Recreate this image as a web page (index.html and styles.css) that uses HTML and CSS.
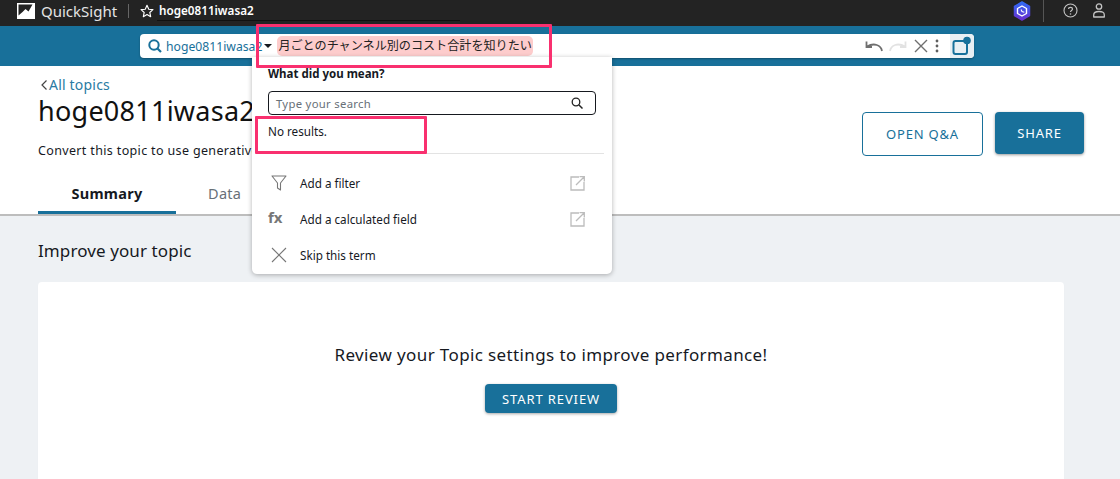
FILE: index.html
```html
<!DOCTYPE html>
<html lang="en">
<head>
<meta charset="utf-8">
<title>QuickSight</title>
<link rel="stylesheet" href="styles.css">
</head>
<body>
<header class="topbar">
  <svg class="logo" width="18" height="16" viewBox="0 0 18 16"><rect width="18" height="16" fill="#fff"/><path fill="#232323" d="M1.500 1.500H15.500L11.500 8.500 8.500 6 5.500 9 1.500 12.500Z"/></svg>
  <span class="brand">QuickSight</span>
  <span class="top-sep"></span>
  <svg class="star" width="14" height="14" viewBox="0 0 16 16"><path fill="none" stroke="#fff" stroke-width="1.300" stroke-linejoin="round" d="M8 1.500 10 6 14.800 6.500 11.200 9.700 12.200 14.500 8 12 3.800 14.500 4.800 9.700 1.200 6.500 6 6Z"/></svg>
  <span class="top-title">hoge0811iwasa2</span>
  <span class="top-spacer"></span>
  <svg class="hex" width="18" height="20" viewBox="0 0 18 20"><defs><linearGradient id="hexg" x1="0" y1="0" x2="0" y2="1"><stop offset="0" stop-color="#2f6bf5"/><stop offset="1" stop-color="#6a2fd0"/></linearGradient></defs><path fill="url(#hexg)" stroke="url(#hexg)" stroke-linejoin="round" stroke-width="1.500" d="M9 1 16.500 5.500V14.500L9 19 1.500 14.500V5.500Z"/><path fill="none" stroke="#fff" stroke-width="1.400" stroke-linejoin="round" d="M9 5 13.500 7.500V12.500L9 15 4.500 12.500V7.500Z"/><path fill="none" stroke="#fff" stroke-width="1.100" d="M8 8.500 9 10.500 11.300 11.300"/></svg>
  <span class="top-sep-right"></span>
  <svg class="help" width="15" height="15" viewBox="0 0 15 15"><circle cx="7.500" cy="7.500" r="6.500" fill="none" stroke="#c4c4c4" stroke-width="1.100"/><path fill="none" stroke="#c4c4c4" stroke-width="1.200" d="M5.500 6C5.500 3.800 9.500 3.800 9.500 6 9.500 7.500 7.500 7.300 7.500 9"/><circle cx="7.500" cy="11" r=".8" fill="#c4c4c4"/></svg>
  <svg class="user" width="12" height="15" viewBox="0 0 12 15"><circle cx="6" cy="3.500" r="2.700" fill="none" stroke="#c4c4c4" stroke-width="1.300"/><path fill="none" stroke="#c4c4c4" stroke-width="1.300" stroke-linejoin="round" d="M.7 14V12C.7 9.500 2.500 8.500 6 8.500S11.300 9.500 11.300 12V14Z"/></svg>
</header>

<div class="askbar">
  <div class="askbox">
    <svg class="ask-search" width="14" height="14" viewBox="0 0 14 14"><circle cx="6" cy="6" r="4.700" fill="none" stroke="#18709a" stroke-width="2"/><path stroke="#18709a" stroke-width="2.200" d="M9.500 9.500 13 13"/></svg>
    <span class="ask-topic">hoge0811iwasa2</span>
    <span class="ask-caret"></span>
    <span class="ask-query">月ごとのチャンネル別のコスト合計を知りたい</span>
    <span class="ask-spacer"></span>
    <svg class="ask-undo" width="18" height="12" viewBox="0 0 18 12"><path fill="none" stroke="#6f6f6f" stroke-width="1.800" d="M17 11C16 5 9 2.500 2 6.500M1.500 1.500V7H7"/></svg>
    <svg class="ask-redo" width="18" height="12" viewBox="0 0 18 12"><path fill="none" stroke="#e2e2e2" stroke-width="1.800" d="M1 11C2 5 9 2.500 16 6.500M16.500 1.500V7H11"/></svg>
    <svg class="ask-x" width="14" height="14" viewBox="0 0 14 14"><path fill="none" stroke="#6f6f6f" stroke-width="1.400" d="M1 1 13 13M13 1 1 13"/></svg>
    <svg class="ask-more" width="4" height="14" viewBox="0 0 4 14"><circle cx="2" cy="2" r="1.400" fill="#5f5f5f"/><circle cx="2" cy="7" r="1.400" fill="#5f5f5f"/><circle cx="2" cy="12" r="1.400" fill="#5f5f5f"/></svg>
    <span class="ask-panel">
      <svg width="20" height="20" viewBox="0 0 20 20"><rect x="1.500" y="5" width="13.500" height="13" rx="2" fill="none" stroke="#18709a" stroke-width="2"/><circle cx="15" cy="4.500" r="3.800" fill="#18709a"/></svg>
    </span>
  </div>
</div>

<main class="page">
  <section class="head">
    <div class="head-row">
      <div class="head-left">
        <a class="back"><svg width="6" height="10" viewBox="0 0 6 10"><path fill="none" stroke="#444" stroke-width="1.200" d="M5.500 .5 1 5 5.500 9.500"/></svg>All topics</a>
        <h1 class="title">hoge0811iwasa2</h1>
        <p class="sub">Convert this topic to use generative BI</p>
      </div>
      <div class="actions">
        <button class="btn btn-outline">OPEN Q&amp;A</button>
        <button class="btn btn-solid">SHARE</button>
      </div>
    </div>
    <nav class="tabs">
      <span class="tab tab-active">Summary</span>
      <span class="tab">Data</span>
    </nav>
  </section>
  <section class="body">
    <h2 class="improve">Improve your topic</h2>
    <div class="card">
      <p class="card-text">Review your Topic settings to improve performance!</p>
      <button class="btn-review">START REVIEW</button>
    </div>
  </section>
</main>

<div class="menu">
  <div class="menu-title">What did you mean?</div>
  <div class="menu-input">
    <span class="menu-ph">Type your search</span>
    <svg width="12" height="12" viewBox="0 0 12 12"><circle cx="5" cy="5" r="3.800" fill="none" stroke="#222" stroke-width="1.300"/><path stroke="#222" stroke-width="1.500" d="M8 8 11.500 11.500"/></svg>
  </div>
  <div class="menu-none">No results.</div>
  <div class="menu-rule"></div>
  <div class="menu-item">
    <svg class="mi" width="16" height="16" viewBox="0 0 16 16"><path fill="none" stroke="#777" stroke-width="1.100" stroke-linejoin="round" d="M1 1H15L9.500 8V15L6.500 13V8Z"/></svg>
    <span class="mi-label">Add a filter</span>
    <svg class="mi-ext" width="15" height="15" viewBox="0 0 15 15"><path fill="none" stroke="#bcbcbc" stroke-width="1.300" d="M9 1H1V14H14V6M6 9 14 1M9.500 .7H14.300V5.500"/></svg>
  </div>
  <div class="menu-item">
    <span class="mi mi-fx">fx</span>
    <span class="mi-label">Add a calculated field</span>
    <svg class="mi-ext" width="15" height="15" viewBox="0 0 15 15"><path fill="none" stroke="#bcbcbc" stroke-width="1.300" d="M9 1H1V14H14V6M6 9 14 1M9.500 .7H14.300V5.500"/></svg>
  </div>
  <div class="menu-item">
    <svg class="mi" width="16" height="16" viewBox="0 0 16 16"><path fill="none" stroke="#777" stroke-width="1.100" d="M1 1 15 15M15 1 1 15"/></svg>
    <span class="mi-label">Skip this term</span>
  </div>
</div>

<div class="mark mark-query"></div>
<div class="mark mark-none"></div>
</body>
</html>
```
FILE: styles.css
```css
* { box-sizing: border-box; }
html, body { margin: 0; padding: 0; }
body {
  width: 1120px;
  height: 479px;
  overflow: hidden;
  position: relative;
  background: #fff;
  color: #16191f;
  font-family: "Noto Sans", "Noto Sans CJK JP", sans-serif;
}
.topbar {
  height: 26px;
  background: #232323;
  display: flex;
  align-items: center;
  padding: 0 0 5px 17px;
  color: #fff;
}
.logo { flex: none; }
.brand { margin-left: 6px; font-size: 15px; color: #e4e4e4; width: 77px; white-space: nowrap; }
.top-sep { width: 1px; height: 14px; background: #666; margin-left: 10px; }
.star { margin-left: 11px; }
.top-title {
  margin-left: 3px;
  padding: 2px 0 2px 2px;
  width: 303px;
  border-bottom: 1px solid #111;
  font-size: 11.700px;
  font-weight: 600;
}
.top-spacer { flex: 1; }
.hex { margin-right: 12px; }
.top-sep-right { width: 1px; height: 22px; background: #555; margin-right: 19px; }
.help { margin-right: 15px; }
.user { margin-right: 15px; }

.askbar {
  height: 40px;
  background: #18709a;
  padding: 8px 146px 0 140px;
}
.askbox {
  height: 24px;
  background: #fff;
  border-radius: 4px;
  display: flex;
  align-items: center;
  padding-left: 8px;
  box-shadow: 0 1px 2px rgba(0,0,0,.3);
  overflow: hidden;
}
.ask-search { flex: none; }
.ask-topic { margin-left: 4px; font-size: 12.200px; color: #18709a; white-space: nowrap; }
.ask-caret {
  margin-left: 2px;
  border: 4px solid transparent;
  border-top: 4px solid #16191f;
  border-bottom: 0;
}
.ask-query {
  margin-left: 5px;
  padding: 0 1px 0 1px;
  height: 20px;
  line-height: 20px;
  font-size: 12.100px;
  background: #fdcccc;
  border-radius: 5px;
  white-space: nowrap;
  color: #222;
}
.ask-spacer { flex: 1; }
.ask-undo, .ask-redo, .ask-x, .ask-more { flex: none; }
.ask-redo { margin-left: 6px; }
.ask-x { margin-left: 7px; }
.ask-more { margin-left: 7px; }
.ask-panel {
  margin-left: 11px;
  width: 24px;
  height: 24px;
  background: #e9eff3;
  display: flex;
  align-items: center;
  justify-content: center;
}

.page { display: flex; flex-direction: column; }
.head {
  height: 150px;
  border-bottom: 2px solid #bdbdbd;
  padding: 0 36px 0 38px;
  display: flex;
  flex-direction: column;
}
.head-row { display: flex; justify-content: space-between; height: 112px; }
.head-left { display: flex; flex-direction: column; }
.back {
  margin-top: 10px;
  font-size: 14px;
  letter-spacing: .2px;
  line-height: 18px;
  color: #2a7ba3;
  display: flex;
  align-items: center;
  gap: 2px;
  margin-left: 3px;
}
.title {
  margin: -1px 0 0;
  font-size: 27px;
  letter-spacing: .25px;
  line-height: 36px;
  font-weight: 400;
  color: #111;
  white-space: nowrap;
}
.sub { margin: 13px 0 0; font-size: 12.500px; letter-spacing: .35px; line-height: 18px; color: #16191f; white-space: nowrap; }
.actions { display: flex; gap: 12px; padding-top: 46px; align-items: flex-start; }
.btn {
  font-family: inherit;
  font-size: 13px;
  letter-spacing: .8px;
  border-radius: 4px;
  height: 44px;
  padding: 0;
}
.btn-outline { width: 121px; background: #fff; border: 1px solid #18709a; color: #18709a; }
.btn-solid { width: 89px; height: 42px; background: #18709a; border: 0; color: #fff; box-shadow: 0 1px 3px rgba(0,0,0,.4); }
.tabs { display: flex; height: 36px; }
.tab {
  font-size: 14.500px;
  letter-spacing: .3px;
  line-height: 30px;
  color: #687078;
  margin-left: 32px;
}
.tab-active {
  width: 138px;
  margin-left: 0;
  text-align: center;
  font-weight: 700;
  color: #16191f;
  border-bottom: 3px solid #18709a;
  height: 36px;
}

.body { background: #eef1f4; padding: 0 56px 0 38px; height: 263px; overflow: hidden; }
.improve { margin: 0; padding-top: 24px; font-size: 17px; letter-spacing: .1px; line-height: 22px; font-weight: 400; color: #16191f; }
.card {
  margin-top: 20px;
  height: 240px;
  background: #fff;
  border-radius: 4px;
  display: flex;
  flex-direction: column;
  align-items: center;
  box-shadow: 0 1px 1px rgba(0,0,0,.06);
}
.card-text { margin: 62px 0 0; font-size: 17px; letter-spacing: .38px; line-height: 22px; color: #16191f; }
.btn-review {
  margin-top: 18px;
  width: 132px;
  height: 29px;
  border: 0;
  border-radius: 4px;
  background: #18709a;
  color: #fff;
  font-family: inherit;
  font-size: 13px;
  letter-spacing: .9px;
  box-shadow: 0 1px 3px rgba(0,0,0,.35);
}

.menu {
  position: absolute;
  left: 252px;
  top: 57px;
  width: 360px;
  height: 217px;
  background: #fff;
  border-radius: 0 0 5px 5px;
  box-shadow: 0 1px 5px rgba(0,0,0,.3);
  padding: 9px 16px 0;
  font-size: 11.700px;
}
.menu-title { font-weight: 700; font-size: 11.500px; line-height: 16px; color: #16191f; }
.menu-input {
  margin-top: 9px;
  width: 328px;
  height: 24px;
  border: 1px solid #16191f;
  border-radius: 4px;
  display: flex;
  align-items: center;
  justify-content: space-between;
  padding: 0 12px 0 7px;
}
.menu-ph { color: #687078; font-size: 11.300px; letter-spacing: .3px; }
.menu-none { margin-top: 8px; line-height: 16px; height: 30px; color: #16191f; }
.menu-rule { width: 336px; height: 1px; background: #e3e3e3; margin-bottom: 11px; }
.menu-item { height: 36px; display: flex; align-items: center; }
.mi { width: 16px; margin-left: 3px; flex: none; }
.mi-fx { font-size: 15px; font-weight: 700; color: #777; margin-left: 0; margin-top: -4px; width: 19px; }
.mi-label { margin-left: 13px; flex: 1; color: #16191f; }
.mi-ext { margin-right: 11px; flex: none; }

.mark { position: absolute; border: 3px solid #f9306f; border-radius: 1px; }
.mark-query { left: 256px; top: 24px; width: 296px; height: 44px; }
.mark-none { left: 255px; top: 116px; width: 172px; height: 38px; }
```
